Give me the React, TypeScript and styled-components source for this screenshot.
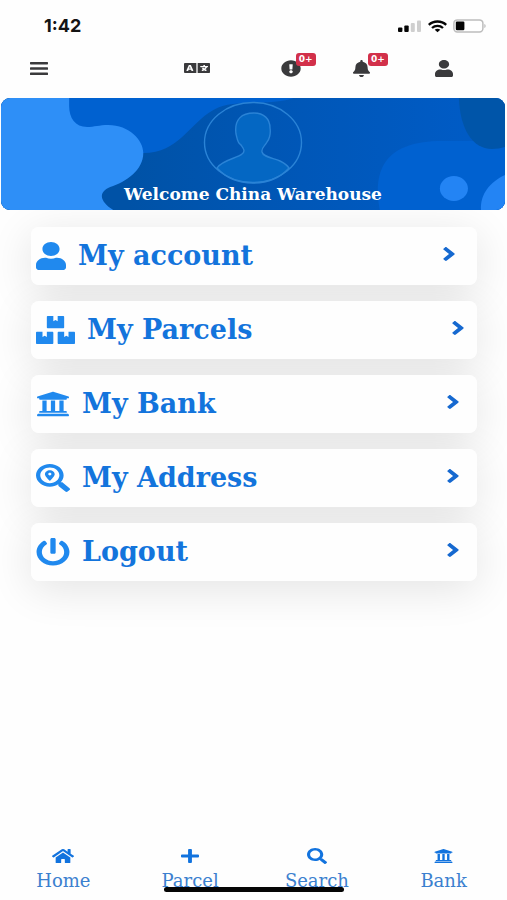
import React from "react";
import styled, { createGlobalStyle } from "styled-components";
import type { IconType } from "react-icons";
import {
  FaAngleRight,
  FaBars,
  FaBell,
  FaBoxes,
  FaExclamationCircle,
  FaHome,
  FaLanguage,
  FaPlus,
  FaPowerOff,
  FaSearch,
  FaSearchLocation,
  FaUniversity,
  FaUser,
} from "react-icons/fa";

const GlobalStyle = createGlobalStyle`
  *, *::before, *::after { box-sizing: border-box; }
  body {
    margin: 0;
    background: #fefefe;
    font-family: "DejaVu Serif", serif;
  }
`;

const Screen = styled.div`
  display: flex;
  flex-direction: column;
  min-height: 100vh;
`;

const StatusBar = styled.div`
  display: flex;
  align-items: center;
  justify-content: space-between;
  height: 52px;
  padding: 0 20px 0 44px;
`;

const Clock = styled.time`
  font: 700 18px/20px Inter, sans-serif;
  color: #141414;
`;

const StatusIcons = styled.div`
  display: flex;
  align-items: center;
  gap: 6px;
`;

const Toolbar = styled.header`
  display: grid;
  grid-template-columns: 32fr 20fr 15fr 17fr 15fr;
  align-items: center;
  height: 32px;
  margin-bottom: 14px;
  padding-left: 30px;
`;

const ToolButton = styled.button`
  position: relative;
  display: flex;
  justify-self: start;
  padding: 0;
  border: 0;
  background: none;
  color: #3a3a3c;
  cursor: pointer;
`;

const Badge = styled.span`
  position: absolute;
  top: -7px;
  left: 15px;
  width: 20px;
  border-radius: 3px;
  background: #d2304a;
  color: #fff;
  font: 700 9px/13px "DejaVu Sans", sans-serif;
  text-align: center;
`;

const Banner = styled.section`
  position: relative;
  z-index: 1;
  display: flex;
  flex-direction: column;
  align-items: center;
  height: 112px;
  margin: 0 2px 0 1px;
  padding-top: 3px;
  border-radius: 9px;
  overflow: hidden;
  background: #0057b4;
`;

const BannerArt = styled.svg`
  position: absolute;
  inset: 0;
  width: 100%;
  height: 100%;
`;

const Avatar = styled.svg`
  position: relative;
  flex: none;
`;

const Welcome = styled.h1`
  position: relative;
  margin: 0;
  color: #fff;
  font-size: 17px;
  line-height: 20px;
  font-weight: 700;
  white-space: nowrap;
`;

const Menu = styled.ul`
  isolation: isolate;
  display: flex;
  flex-direction: column;
  gap: 16px;
  margin: 17px 30px 0 31px;
  padding: 0;
  list-style: none;
`;

const MenuItem = styled.li`
  position: relative;

  &::before {
    content: "";
    position: absolute;
    inset: 0;
    z-index: -1;
    border-radius: 8px;
    box-shadow: 0 8px 44px rgba(0, 0, 0, 0.11);
  }
`;

const MenuLink = styled.a`
  display: flex;
  align-items: center;
  height: 58px;
  padding-left: 5px;
  border-radius: 8px;
  background: #fefefe;
  color: #2089ee;
  text-decoration: none;
`;

const MenuLabel = styled.span`
  flex: 0 0 82%;
  margin: 0 2px 0 12px;
  color: #1374dc;
  font-size: 27px;
  line-height: 32px;
  font-weight: 700;
`;

const Chevron = styled.span`
  display: flex;
  margin-bottom: 4px;
  color: #1669d0;
`;

const BottomNav = styled.nav`
  position: relative;
  display: grid;
  grid-template-columns: repeat(4, 1fr);
  margin-top: auto;
  padding-bottom: 8px;
`;

const NavLink = styled.a`
  display: flex;
  flex-direction: column;
  align-items: center;
  gap: 6px;
  color: #1273de;
  text-decoration: none;
`;

const NavLabel = styled.span`
  color: #3b80cf;
  font-size: 18px;
  line-height: 22px;
`;

const HomeIndicator = styled.div`
  position: absolute;
  bottom: 8px;
  left: 50%;
  width: 180px;
  height: 5px;
  margin-left: -90px;
  border-radius: 3px;
  background: #050505;
`;

const GlyphBox = styled.span<{ $w: number; $h: number }>`
  display: flex;
  flex: none;

  svg {
    width: ${(p) => p.$w}px;
    height: ${(p) => p.$h}px;
  }
`;

interface GlyphProps {
  icon: IconType;
  width: number;
  height: number;
}

function Glyph({ icon: Icon, width, height }: GlyphProps) {
  return (
    <GlyphBox $w={width} $h={height}>
      <Icon preserveAspectRatio="none" aria-hidden />
    </GlyphBox>
  );
}

const tools = [
  { label: "Menu", icon: FaBars, width: 18, height: 17 },
  { label: "Language", icon: FaLanguage, width: 26, height: 16 },
  { label: "Alerts", icon: FaExclamationCircle, width: 20, height: 17, badge: "0+" },
  { label: "Notifications", icon: FaBell, width: 17, height: 17, badge: "0+" },
  { label: "Profile", icon: FaUser, width: 18, height: 17 },
];

const menu = [
  { label: "My account", icon: FaUser, width: 30 },
  { label: "My Parcels", icon: FaBoxes, width: 39 },
  { label: "My Bank", icon: FaUniversity, width: 34 },
  { label: "My Address", icon: FaSearchLocation, width: 34 },
  { label: "Logout", icon: FaPowerOff, width: 34 },
];

const tabs = [
  { label: "Home", icon: FaHome, width: 22 },
  { label: "Parcel", icon: FaPlus, width: 18 },
  { label: "Search", icon: FaSearch, width: 20 },
  { label: "Bank", icon: FaUniversity, width: 19 },
];

function StatusSymbols() {
  return (
    <StatusIcons>
      <svg width="24" height="13" viewBox="0 0 24 13" aria-hidden>
        <rect x="0" y="7.5" width="4.4" height="4.5" rx="1" fill="#050505" />
        <rect x="6.3" y="5.5" width="4.4" height="6.5" rx="1" fill="#050505" />
        <rect x="12.8" y="3" width="4" height="9" rx="1" fill="#cfcfcf" />
        <rect x="19" y="0.5" width="4" height="11.5" rx="1" fill="#cfcfcf" />
      </svg>
      <svg width="19" height="13" viewBox="0 0 19 13" fill="none" stroke="#050505" strokeWidth="2.3" aria-hidden>
        <path d="M0.8 4.8C5.5 0.4 13.5 0.4 18.2 4.8" />
        <path d="M4 8C7 5.2 12 5.2 15 8" />
        <path d="M6.7 9.7C8.2 8.3 10.8 8.3 12.3 9.7L9.5 12.2Z" fill="#050505" stroke="none" />
      </svg>
      <svg width="34" height="14" viewBox="0 0 34 14" aria-hidden>
        <rect x="0.9" y="0.9" width="29" height="12" rx="3.4" fill="#fff" stroke="#bdbdbd" strokeWidth="1.5" />
        <rect x="2.8" y="2.6" width="8.6" height="8.6" rx="1.2" fill="#050505" />
        <path d="M31.3 5v4c1.8-.5 1.8-3.5 0-4z" fill="#bdbdbd" />
      </svg>
    </StatusIcons>
  );
}

export default function App() {
  return (
    <>
      <GlobalStyle />
      <Screen>
        <StatusBar>
          <Clock>1:42</Clock>
          <StatusSymbols />
        </StatusBar>

        <Toolbar>
          {tools.map(({ label, badge, ...glyph }) => (
            <ToolButton key={label} type="button" aria-label={label}>
              <Glyph {...glyph} />
              {badge && <Badge>{badge}</Badge>}
            </ToolButton>
          ))}
        </Toolbar>

        <Banner>
          <BannerArt viewBox="0 0 503 112" preserveAspectRatio="none" aria-hidden>
            <defs>
              <linearGradient id="base" x1="0" x2="1">
                <stop offset="0.25" stopColor="#0052a6" />
                <stop offset="0.6" stopColor="#0057b8" />
                <stop offset="1" stopColor="#005cc8" />
              </linearGradient>
            </defs>
            <rect width="503" height="112" fill="url(#base)" />
            <path d="M60 0H292C265 9 232 0 212 12C187 26 178 55 142 55L60 50Z" fill="#0061d0" />
            <path
              d="M0 0H68V8C68 20 74 29 86 29C93 29 98 27 107 27C128 27 142 42 142 55C142 72 125 84 109 89C97 94 98 103 112 112H0Z"
              fill="#2e8ff7"
            />
            <path d="M378 112C370 70 385 43 440 43H503V112Z" fill="#0061d0" />
            <path d="M457 0C458 30 470 51 490 51Q497 51 503 49V0Z" fill="#0055a9" />
            <ellipse cx="452" cy="90.5" rx="14" ry="12.5" fill="#2384f4" />
            <path d="M503 77C488 84 478 96 479 112H503Z" fill="#2384f4" />
          </BannerArt>
          <Avatar width="100" height="83" viewBox="0 0 100 83" fill="none" stroke="#2a83d6" strokeWidth="1.4" aria-hidden>
            <path
              d="M14 67C19 59 35 57 39 53C43 50 40 47 38 44C34 42 34 36 33 33C31 18 39 12 51 12C61 12 67 18 67 27C68 33 66 39 64 41C62 45 58 47 59 51C60 56 70 57 77 60C81 62 84 64 86 67C77 77 64 82 50 82C36 82 23 77 14 67Z"
              fill="#0467c3"
            />
            <ellipse cx="50" cy="41.5" rx="48.5" ry="40" />
          </Avatar>
          <Welcome>Welcome China Warehouse</Welcome>
        </Banner>

        <Menu>
          {menu.map(({ label, icon, width }) => (
            <MenuItem key={label}>
              <MenuLink href="#">
                <Glyph icon={icon} width={width} height={28} />
                <MenuLabel>{label}</MenuLabel>
                <Chevron>
                  <Glyph icon={FaAngleRight} width={14} height={22} />
                </Chevron>
              </MenuLink>
            </MenuItem>
          ))}
        </Menu>

        <BottomNav>
          {tabs.map(({ label, icon, width }) => (
            <NavLink key={label} href="#">
              <Glyph icon={icon} width={width} height={16} />
              <NavLabel>{label}</NavLabel>
            </NavLink>
          ))}
          <HomeIndicator />
        </BottomNav>
      </Screen>
    </>
  );
}
